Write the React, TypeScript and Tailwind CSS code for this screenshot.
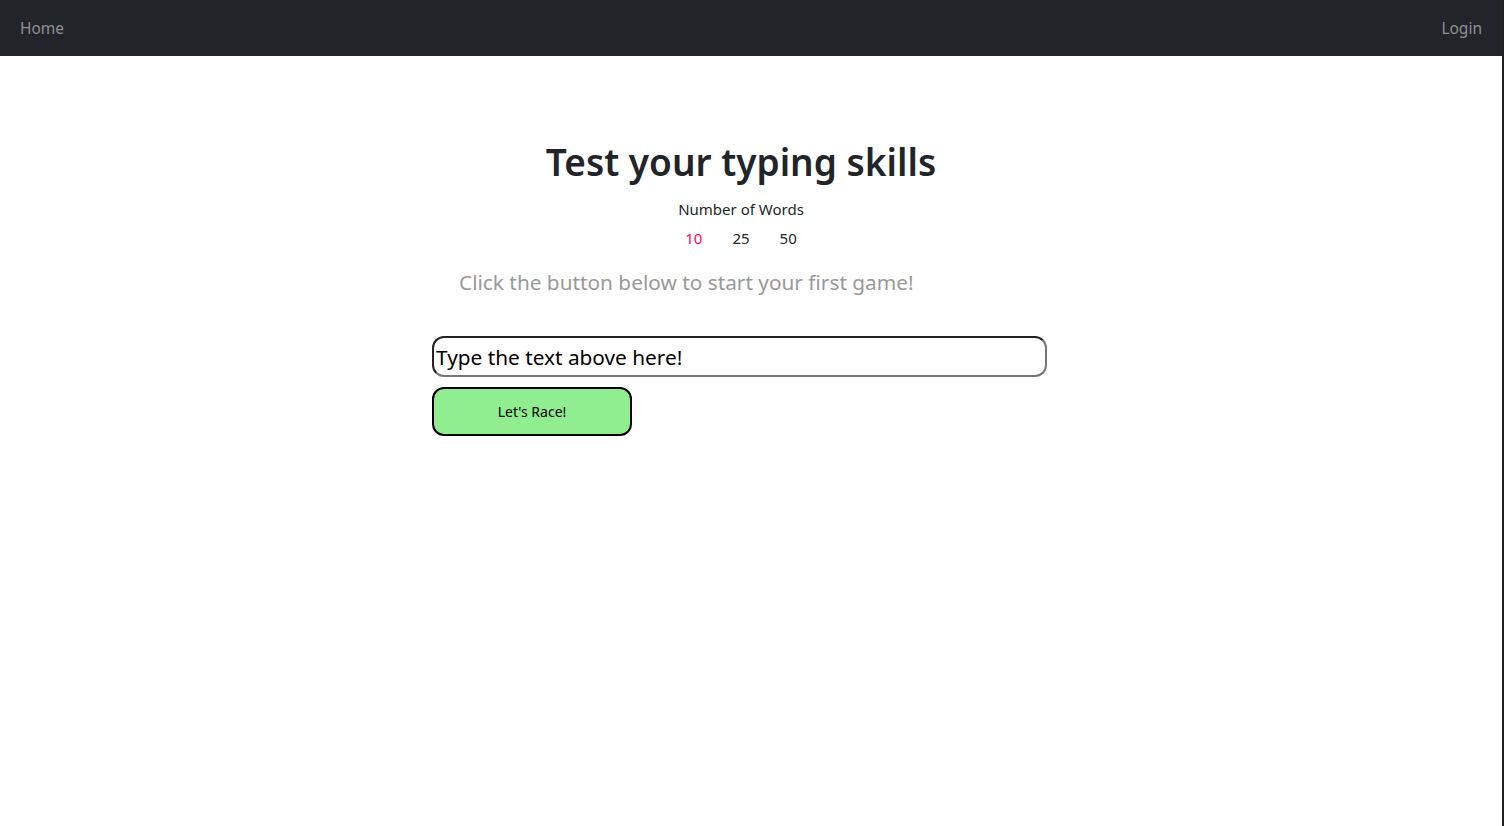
import React from "react";

const font = { fontFamily: '"Noto Sans", "Open Sans", sans-serif' };

function NavBar() {
  return (
    <nav className="flex h-[56px] items-center justify-between bg-[#212529] px-[20px] pt-[2px] text-[15.5px] text-[#8f9193]">
      <a href="#">Home</a>
      <a href="#">Login</a>
    </nav>
  );
}

function WordCount() {
  const options = [10, 25, 50];
  const [selected, setSelected] = React.useState(10);
  return (
    <div className="flex flex-col items-center">
      <p className="mt-[7px] text-[15px] leading-[24px] text-[#212529]">Number of Words</p>
      <div className="mt-[5px] flex gap-[30px] text-[15px] leading-[24px]">
        {options.map((n) => (
          <button
            key={n}
            onClick={() => setSelected(n)}
            className={n === selected ? "text-[#ff0a5a]" : "text-[#212529]"}
          >
            {n}
          </button>
        ))}
      </div>
    </div>
  );
}

export default function App() {
  return (
    <div style={font} className="min-h-[826px] bg-white border-r-2 border-[#202020]">
      <NavBar />
      <main className="ml-[432px] w-[618px] pt-[78px]">
        <h1 className="text-center text-[37px] font-semibold leading-[56px] text-[#212529]">
          Test your typing skills
        </h1>
        <WordCount />
        <p className="mt-[14px] pl-[27px] text-[20.8px] leading-[36px] text-[#999]">
          Click the button below to start your first game!
        </p>
        <input
          className="mt-[36px] h-[41px] w-[615px] rounded-[12px] border-2 border-[#222] border-b-[#767676] border-r-[#767676] px-[2px] text-[20.8px] text-black outline-none placeholder:text-black"
          placeholder="Type the text above here!"
        />
        <button className="mt-[10px] block h-[49px] w-[200px] rounded-[12px] border-2 border-black bg-[#90ee90] text-[14px] text-black">
          Let's Race!
        </button>
      </main>
    </div>
  );
}
